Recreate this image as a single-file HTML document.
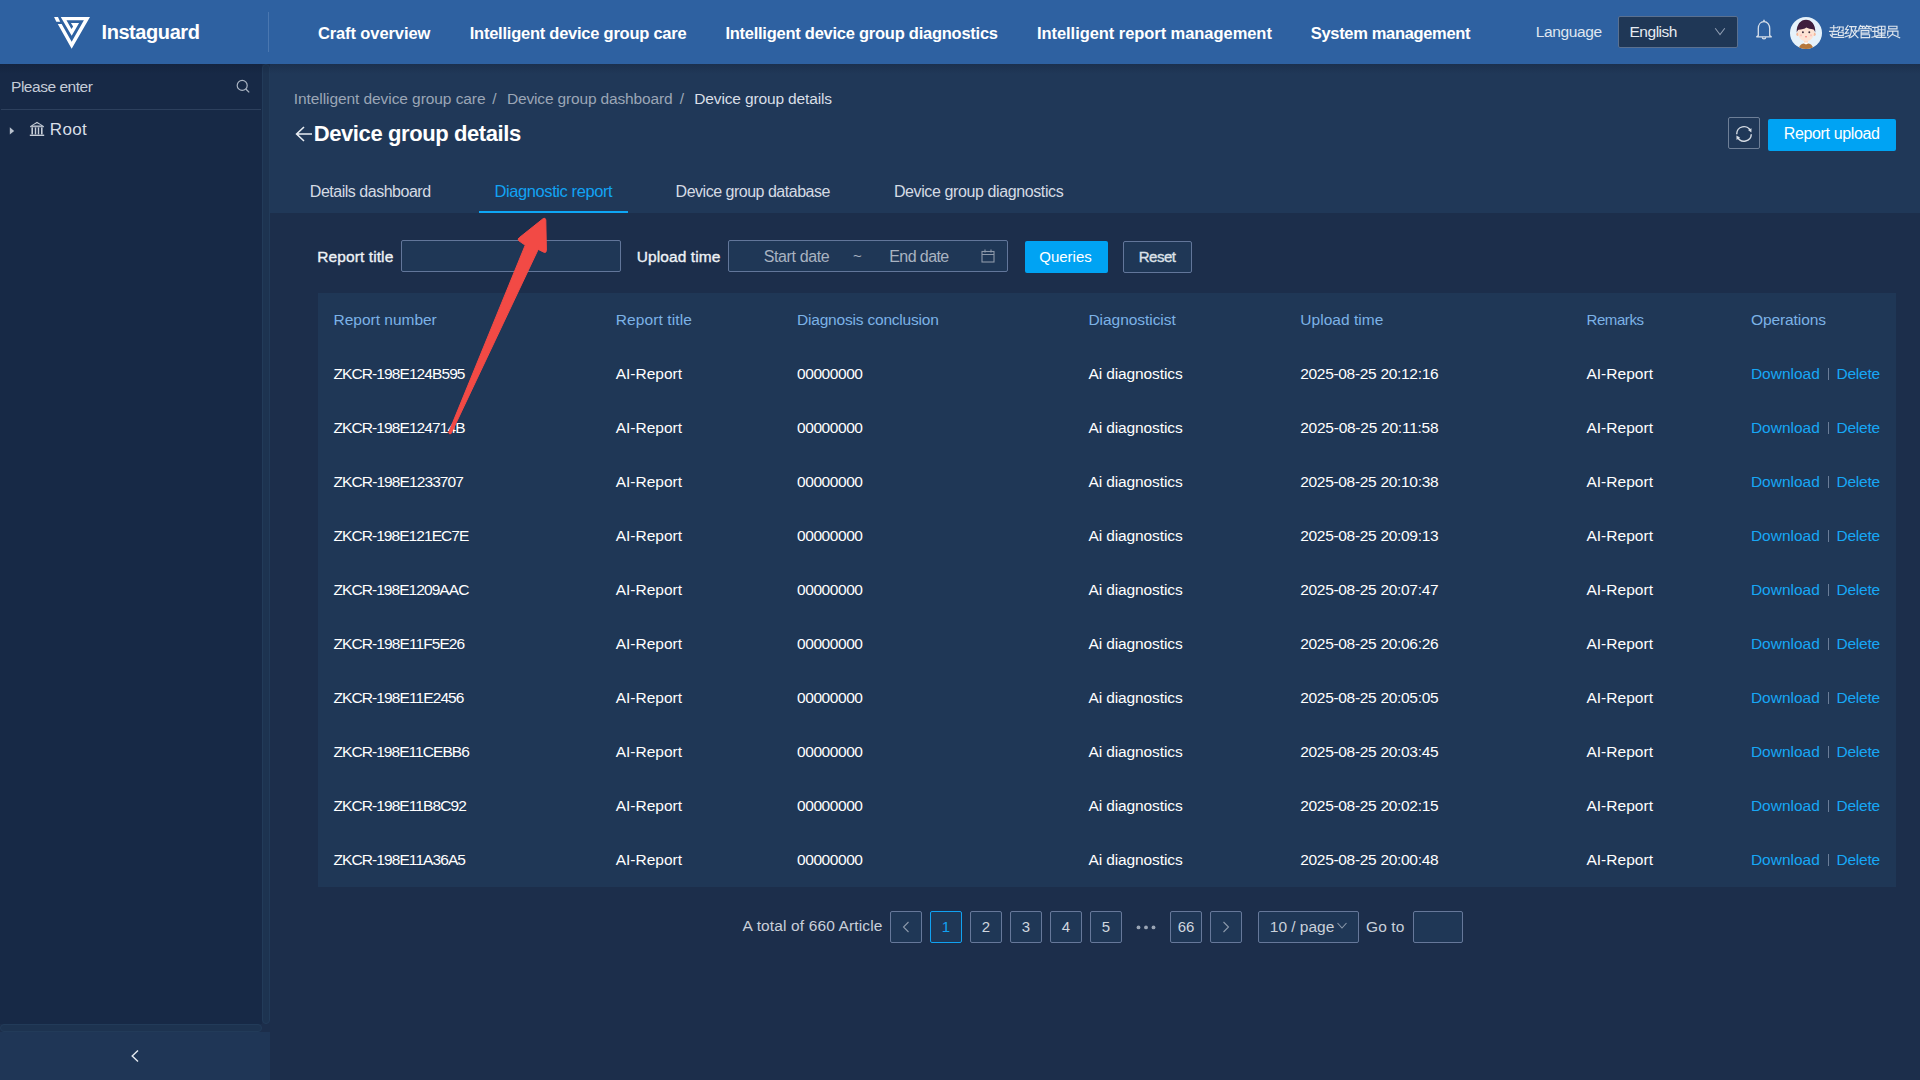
<!DOCTYPE html>
<html><head><meta charset="utf-8"><title>Device group details</title>
<style>
html,body{margin:0;padding:0;width:1920px;height:1080px;overflow:hidden;background:#1c2e4b;font-family:"Liberation Sans",sans-serif}
.a{position:absolute;box-sizing:border-box}
.t{position:absolute;white-space:pre;line-height:1.2;font-family:"Liberation Sans",sans-serif}
svg{position:absolute;overflow:visible}
</style></head><body>
<!-- header -->
<div class="a" style="left:0;top:0;width:1920px;height:64px;background:#2e61a1"></div>
<div class="a" style="left:268px;top:12px;width:1px;height:40px;background:#4a77b0"></div>
<svg style="left:50px;top:12px" width="45" height="40" viewBox="0 0 1215 1080">
  <polygon fill="#fff" points="110,135 215,135 275,265 170,265"/>
  <polygon fill="#fff" points="210,325 315,325 585,805 915,225 445,225 580,460 625,390 565,295 785,295 585,640 290,135 1080,135 585,990"/>
</svg>
<!-- language select -->
<div class="a" style="left:1618px;top:16px;width:119.5px;height:31.5px;background:#1f3756;border:1px solid #5a7090;border-radius:2px"></div>
<svg style="left:1713px;top:27px" width="14" height="10"><path d="M2.2,1.2 L7,7.6 L11.8,1.2" fill="none" stroke="#8d9bb0" stroke-width="1.05"/></svg>
<!-- bell -->
<svg style="left:1754px;top:18px" width="20" height="24" viewBox="0 0 20 24">
  <path d="M4.3,17.6 L4.3,10.6 C4.3,6.4 6.7,3.7 10,3.7 C13.3,3.7 15.7,6.4 15.7,10.6 L15.7,17.6 L17.3,18.8 L2.7,18.8 Z" fill="none" stroke="#d8e0ea" stroke-width="1.3" stroke-linejoin="round"/>
  <path d="M10,1.8 L10,3.7" stroke="#d8e0ea" stroke-width="1.5"/>
  <path d="M8.3,19.2 A1.7,1.7 0 0 0 11.7,19.2" fill="none" stroke="#d8e0ea" stroke-width="1.3"/>
</svg>
<!-- avatar -->
<svg style="left:1790px;top:17px" width="32" height="32" viewBox="0 0 32 32">
  <defs><clipPath id="cc"><circle cx="16" cy="16" r="16"/></clipPath></defs>
  <circle cx="16" cy="16" r="16" fill="#e6f2fb"/>
  <g clip-path="url(#cc)">
    <path d="M8.6,33 C8.6,28.2 11.8,26.2 16,26.2 C20.2,26.2 23.4,28.2 23.4,33 Z" fill="#b5773c"/>
    <path d="M13.2,26 L16,27.6 L18.8,26 L18.2,25 L13.8,25 Z" fill="#ffffff"/>
    <rect x="14" y="22" width="4" height="3.6" fill="#fcd9c4"/>
    <ellipse cx="7.6" cy="17.2" rx="1.3" ry="1.8" fill="#f6b99a"/>
    <ellipse cx="24.4" cy="17.2" rx="1.3" ry="1.8" fill="#f6b99a"/>
    <path d="M7.8,10 L24.2,10 L24.2,14 C24.2,20.5 21,24.2 16,24.2 C11,24.2 7.8,20.5 7.8,14 Z" fill="#fde3d3"/>
    <path d="M6.7,15.5 C6.4,7.5 10.6,2.8 16,2.8 C21.4,2.8 25.6,7.5 25.3,15.5 C24.6,13.8 24,13.2 23.6,12.6 C20.6,12.1 17.6,11.5 16.2,10.6 C15,12 11.5,12.6 8.4,12.8 C7.6,13.6 7.1,14.4 6.7,15.5 Z" fill="#3f1e3d"/>
    <circle cx="12.9" cy="15.3" r="0.95" fill="#3a2a3a"/>
    <circle cx="19.3" cy="15.3" r="0.95" fill="#3a2a3a"/>
    <ellipse cx="16" cy="19.8" rx="1" ry="0.55" fill="#f05a5a"/>
    <circle cx="11" cy="18.3" r="1.1" fill="#fbc4c0"/>
    <circle cx="21" cy="18.3" r="1.1" fill="#fbc4c0"/>
  </g>
</svg>
<!-- chinese name approximated -->
<svg style="left:1830px;top:24px" width="72" height="16" viewBox="0 0 72 16" stroke="#dfe6ee" stroke-width="1.15" fill="none" stroke-linecap="square">
  <path d="M0.31,3.78 L7.25,3.78 M3.78,1.66 L3.78,7.63 M-0.46,7.44 L7.63,7.44 M2.24,8.79 L2.24,13.03 M2.24,10.33 L6.86,10.33 M0.31,10.72 L2.24,13.03 L4.55,13.41 L13.80,13.41 M7.63,3.01 L13.22,3.01 L13.03,6.67 L11.87,6.67 M9.75,3.01 L9.18,5.51 L7.83,6.86 M8.40,8.21 L13.22,8.21 L13.22,11.49 L8.40,11.49 L8.40,8.21"/>
  <path d="M18.04,1.47 L15.53,5.32 L18.23,5.51 L15.15,9.56 L18.62,8.98 M15.34,12.84 L19.00,11.49 M19.58,2.62 L26.13,2.62 L24.59,6.86 L27.67,6.86 M21.51,2.62 L21.12,8.79 L19.19,13.80 M21.89,5.71 L24.20,9.56 L28.06,13.80 M26.52,7.63 L23.43,11.49 L20.74,13.41"/>
  <path d="M30.37,1.47 L29.21,3.78 M29.98,2.43 L34.22,2.43 M31.91,2.62 L32.68,3.78 M36.73,1.47 L35.57,3.78 M36.34,2.43 L41.16,2.43 M38.27,2.62 L39.04,3.78 M28.83,6.86 L28.83,4.74 L41.16,4.74 L41.16,6.86 M34.99,3.20 L34.99,4.55 M31.14,6.67 L38.85,6.67 L38.85,9.18 L31.14,9.18 M31.14,6.67 L31.14,13.80 M31.14,10.72 L39.62,10.72 L39.62,13.61 L31.14,13.61"/>
  <path d="M42.32,3.39 L47.33,3.39 M42.70,7.44 L46.94,7.44 M44.82,3.39 L44.82,12.26 M41.93,13.22 L47.71,11.68 M48.10,2.24 L55.03,2.24 L55.03,9.18 L48.10,9.18 L48.10,2.24 M48.10,5.71 L55.03,5.71 M51.56,2.24 L51.56,13.41 M48.48,11.10 L54.65,11.10 M46.17,13.41 L56.00,13.41"/>
  <path d="M58.69,2.24 L66.98,2.24 L66.98,4.94 L58.69,4.94 L58.69,2.24 M57.73,11.49 L57.73,7.06 L67.94,7.06 L67.94,11.49 M62.74,7.25 L62.74,9.95 L58.12,13.80 M63.13,10.72 L69.68,13.80"/>
</svg>
<!-- sidebar -->
<div class="a" style="left:0;top:64px;width:262px;height:960px;background:#172946"></div>
<div class="a" style="left:262px;top:64px;width:8px;height:960px;background:#1d3350;border:1px solid #223b59;border-radius:4px"></div>
<div class="a" style="left:0;top:1024px;width:262px;height:8px;background:#1d3350;border:1px solid #223b59;border-radius:4px"></div>

<div class="a" style="left:1px;top:109px;width:260px;height:1px;background:#2d405d"></div>
<svg style="left:234px;top:78px" width="18" height="18" viewBox="0 0 18 18">
  <circle cx="8.2" cy="7.4" r="5" fill="none" stroke="#aab4c2" stroke-width="1.2"/>
  <path d="M11.8,11 L15.2,14.4" stroke="#aab4c2" stroke-width="1.3"/>
</svg>
<svg style="left:8px;top:125px" width="10" height="12" viewBox="0 0 10 12"><path d="M1.8,2.3 L6.2,5.9 L1.8,9.6 Z" fill="#b9c1cd"/></svg>
<svg style="left:28px;top:120px" width="18" height="18" viewBox="0 0 18 18" fill="#c7ced8">
  <path d="M9,1.8 L16,6.2 L2,6.2 Z M9,3.2 L13.6,5.4 L4.4,5.4 Z" fill-rule="evenodd"/>
  <rect x="2" y="6.2" width="14" height="1"/>
  <rect x="3.4" y="7.4" width="1.6" height="7"/>
  <rect x="6.8" y="7.4" width="1.4" height="7"/>
  <rect x="9.8" y="7.4" width="1.4" height="7"/>
  <rect x="13" y="7.4" width="1.6" height="7"/>
  <rect x="1.8" y="14.6" width="14.4" height="1.4"/>
</svg>
<!-- collapse bar -->
<div class="a" style="left:0;top:1032px;width:270px;height:48px;background:#1f3656"></div>
<svg style="left:128px;top:1048px" width="14" height="16" viewBox="0 0 14 16"><path d="M10,2.5 L4.2,8 L10,13.5" fill="none" stroke="#e6ebf1" stroke-width="1.4"/></svg>
<!-- main top section -->
<div class="a" style="left:270px;top:64px;width:1650px;height:149px;background:#203858"></div>
<svg style="left:293px;top:124px" width="22" height="20" viewBox="0 0 22 20"><path d="M19,10 H4 M11,3 L3.6,10 L11,17" fill="none" stroke="#e8edf3" stroke-width="1.6"/></svg>
<!-- refresh -->
<div class="a" style="left:1728px;top:117px;width:32px;height:32px;border:1px solid #6e7f97;border-radius:2px"></div>
<svg style="left:1734px;top:124px" width="20" height="20" viewBox="0 0 20 20">
  <path d="M2.7,10.2 A7.3,7.3 0 0 1 16.6,6.9" fill="none" stroke="#d5dbe3" stroke-width="1.45"/>
  <path d="M17.3,10.2 A7.3,7.3 0 0 1 3.5,13.2" fill="none" stroke="#d5dbe3" stroke-width="1.45"/>
  <path d="M14,6 L17.5,4.3 L17.4,8.5 Z" fill="#d5dbe3"/>
  <path d="M2.4,11.6 L6,13.4 L2.6,16 Z" fill="#d5dbe3"/>
</svg>
<div class="a" style="left:1768px;top:119px;width:128px;height:32px;background:#00a3f3;border-radius:2px"></div>
<div class="a" style="left:0;top:64px;width:1920px;height:10px;background:linear-gradient(rgba(8,18,38,0.2),rgba(8,18,38,0))"></div>
<!-- tab underline -->
<div class="a" style="left:479px;top:211px;width:149px;height:2px;background:#0ea6f5"></div>
<!-- filters -->
<div class="a" style="left:401px;top:240px;width:220px;height:32px;background:#1f3756;border:1px solid #62769a;border-radius:2px"></div>
<div class="a" style="left:728px;top:240px;width:280px;height:32px;background:#1f3756;border:1px solid #62769a;border-radius:2px"></div>
<svg style="left:980px;top:248px" width="16" height="16" viewBox="0 0 16 16" fill="none" stroke="#8d99aa" stroke-width="1.1">
  <rect x="2" y="3.5" width="12" height="10.5"/>
  <path d="M2,6.5 H14 M5,1.5 V4.5 M11,1.5 V4.5"/>
</svg>
<div class="a" style="left:1025px;top:241px;width:83px;height:32px;background:#00a3f3;border-radius:2px"></div>
<div class="a" style="left:1123px;top:241px;width:69px;height:32px;background:#1f3756;border:1px solid #62769a;border-radius:2px"></div>
<!-- table -->
<div class="a" style="left:318px;top:293px;width:1578px;height:594px;background:#1f3756"></div>

<!-- pagination -->
<div class="a pg" style="left:890px;top:911px;width:32px;height:32px;background:#1f3756;border:1px solid #66789a;border-radius:2px"></div>
<svg style="left:899px;top:919px" width="14" height="16" viewBox="0 0 14 16"><path d="M9.5,3 L4.5,8 L9.5,13" fill="none" stroke="#8c99ab" stroke-width="1.1"/></svg>
<div class="a" style="left:930px;top:911px;width:32px;height:32px;background:#1f3756;border:1px solid #11a2f2;border-radius:2px"></div>
<div class="a" style="left:970px;top:911px;width:32px;height:32px;background:#1f3756;border:1px solid #66789a;border-radius:2px"></div>
<div class="a" style="left:1010px;top:911px;width:32px;height:32px;background:#1f3756;border:1px solid #66789a;border-radius:2px"></div>
<div class="a" style="left:1050px;top:911px;width:32px;height:32px;background:#1f3756;border:1px solid #66789a;border-radius:2px"></div>
<div class="a" style="left:1090px;top:911px;width:32px;height:32px;background:#1f3756;border:1px solid #66789a;border-radius:2px"></div>
<svg style="left:1134px;top:920px" width="24" height="14" viewBox="0 0 24 14" fill="#9aa5b5"><circle cx="4.5" cy="7.4" r="1.9"/><circle cx="12" cy="7.4" r="1.9"/><circle cx="19.5" cy="7.4" r="1.9"/></svg>
<div class="a" style="left:1170px;top:911px;width:32px;height:32px;background:#1f3756;border:1px solid #66789a;border-radius:2px"></div>
<div class="a" style="left:1210px;top:911px;width:32px;height:32px;background:#1f3756;border:1px solid #66789a;border-radius:2px"></div>
<svg style="left:1219px;top:919px" width="14" height="16" viewBox="0 0 14 16"><path d="M4.5,3 L9.5,8 L4.5,13" fill="none" stroke="#8c99ab" stroke-width="1.1"/></svg>
<div class="a" style="left:1258px;top:911px;width:101px;height:32px;background:#1f3756;border:1px solid #66789a;border-radius:2px"></div>
<svg style="left:1335px;top:920px" width="14" height="12" viewBox="0 0 14 12"><path d="M2.5,3 L7,8 L11.5,3" fill="none" stroke="#8c99ab" stroke-width="1.1"/></svg>
<div class="a" style="left:1413px;top:911px;width:50px;height:32px;background:#1f3756;border:1px solid #66789a;border-radius:2px"></div>
<svg style="left:0;top:0" width="1920" height="1080" viewBox="0 0 1920 1080" font-family="&quot;Liberation Sans&quot;, sans-serif">
<text x="101.50" y="39" font-size="20.0" font-weight="700" fill="#ffffff" textLength="98.41" lengthAdjust="spacing">Instaguard</text>
<text x="317.88" y="39" font-size="16.5" font-weight="700" fill="#ffffff" textLength="112.42" lengthAdjust="spacing">Craft overview</text>
<text x="469.78" y="39" font-size="16.5" font-weight="700" fill="#ffffff" textLength="216.82" lengthAdjust="spacing">Intelligent device group care</text>
<text x="725.38" y="39" font-size="16.5" font-weight="700" fill="#ffffff" textLength="272.62" lengthAdjust="spacing">Intelligent device group diagnostics</text>
<text x="1036.97" y="39" font-size="16.5" font-weight="700" fill="#ffffff" textLength="234.92" lengthAdjust="spacing">Intelligent report management</text>
<text x="1310.77" y="39" font-size="16.5" font-weight="700" fill="#ffffff" textLength="159.72" lengthAdjust="spacing">System management</text>
<text x="1535.72" y="37" font-size="15.5" font-weight="400" fill="#dfe6f0" textLength="66.44" lengthAdjust="spacing">Language</text>
<text x="1629.52" y="37" font-size="15.5" font-weight="400" fill="#e6ebf2" textLength="47.94" lengthAdjust="spacing">English</text>
<text x="11.03" y="92" font-size="15.5" font-weight="400" fill="#c4ccd8" textLength="81.84" lengthAdjust="spacing">Please enter</text>
<text x="49.85" y="135" font-size="17.0" font-weight="400" fill="#d8dee8" textLength="36.76" lengthAdjust="spacing">Root</text>
<text x="293.73" y="104" font-size="15.5" font-weight="400" fill="#9ba6b6" textLength="191.84" lengthAdjust="spacing">Intelligent device group care</text>
<text x="492.23" y="104" font-size="15.5" font-weight="400" fill="#9ba6b6">/</text>
<text x="506.93" y="104" font-size="15.5" font-weight="400" fill="#9ba6b6" textLength="165.64" lengthAdjust="spacing">Device group dashboard</text>
<text x="679.73" y="104" font-size="15.5" font-weight="400" fill="#9ba6b6">/</text>
<text x="694.23" y="104" font-size="15.5" font-weight="400" fill="#d9dfe7" textLength="137.84" lengthAdjust="spacing">Device group details</text>
<text x="313.70" y="141" font-size="22.0" font-weight="700" fill="#ffffff" textLength="207.56" lengthAdjust="spacing">Device group details</text>
<text x="1783.70" y="139" font-size="16.0" font-weight="400" fill="#ffffff" textLength="96.27" lengthAdjust="spacing">Report upload</text>
<text x="309.80" y="197" font-size="16.0" font-weight="400" fill="#d5dbe4" textLength="121.28" lengthAdjust="spacing">Details dashboard</text>
<text x="494.48" y="197" font-size="16.5" font-weight="400" fill="#12a3f3" textLength="118.12" lengthAdjust="spacing">Diagnostic report</text>
<text x="675.60" y="197" font-size="16.0" font-weight="400" fill="#d5dbe4" textLength="154.78" lengthAdjust="spacing">Device group database</text>
<text x="893.90" y="197" font-size="16.0" font-weight="400" fill="#d5dbe4" textLength="169.77" lengthAdjust="spacing">Device group diagnostics</text>
<text x="317.23" y="262" font-size="15.5" font-weight="400" fill="#eef2f6" stroke="#eef2f6" stroke-width="0.35" textLength="76.04" lengthAdjust="spacing">Report title</text>
<text x="636.83" y="262" font-size="15.5" font-weight="400" fill="#eef2f6" stroke="#eef2f6" stroke-width="0.35" textLength="83.44" lengthAdjust="spacing">Upload time</text>
<text x="763.70" y="262" font-size="16.0" font-weight="400" fill="#a9b3c1" textLength="66.08" lengthAdjust="spacing">Start date</text>
<text x="853.05" y="261" font-size="15" font-weight="400" fill="#a9b3c1">~</text>
<text x="889.20" y="262" font-size="16.0" font-weight="400" fill="#a9b3c1" textLength="60.08" lengthAdjust="spacing">End date</text>
<text x="1039.25" y="262" font-size="15.0" font-weight="400" fill="#ffffff" textLength="52.50" lengthAdjust="spacing">Queries</text>
<text x="1138.75" y="262" font-size="15.0" font-weight="400" fill="#dde2e9" stroke="#dde2e9" stroke-width="0.35" textLength="37.20" lengthAdjust="spacing">Reset</text>
<text x="333.53" y="325" font-size="15.5" font-weight="400" fill="#7cb2e6" textLength="103.24" lengthAdjust="spacing">Report number</text>
<text x="615.73" y="325" font-size="15.5" font-weight="400" fill="#7cb2e6" textLength="76.24" lengthAdjust="spacing">Report title</text>
<text x="797.02" y="325" font-size="15.5" font-weight="400" fill="#7cb2e6" textLength="141.84" lengthAdjust="spacing">Diagnosis conclusion</text>
<text x="1088.42" y="325" font-size="15.5" font-weight="400" fill="#7cb2e6" textLength="87.34" lengthAdjust="spacing">Diagnosticist</text>
<text x="1300.22" y="325" font-size="15.5" font-weight="400" fill="#7cb2e6" textLength="83.24" lengthAdjust="spacing">Upload time</text>
<text x="1586.45" y="325" font-size="15.0" font-weight="400" fill="#7cb2e6" textLength="57.60" lengthAdjust="spacing">Remarks</text>
<text x="1750.92" y="325" font-size="15.5" font-weight="400" fill="#7cb2e6" textLength="75.14" lengthAdjust="spacing">Operations</text>
<text x="333.53" y="379" font-size="15.5" font-weight="400" fill="#ffffff" textLength="131.94" lengthAdjust="spacing">ZKCR-198E124B595</text>
<text x="615.73" y="379" font-size="15.5" font-weight="400" fill="#ffffff" textLength="66.34" lengthAdjust="spacing">AI-Report</text>
<text x="797.02" y="379" font-size="15.5" font-weight="400" fill="#ffffff" textLength="65.94" lengthAdjust="spacing">00000000</text>
<text x="1088.42" y="379" font-size="15.5" font-weight="400" fill="#ffffff" textLength="94.24" lengthAdjust="spacing">Ai diagnostics</text>
<text x="1300.22" y="379" font-size="15.5" font-weight="400" fill="#ffffff" textLength="138.34" lengthAdjust="spacing">2025-08-25 20:12:16</text>
<text x="1586.42" y="379" font-size="15.5" font-weight="400" fill="#ffffff" textLength="66.54" lengthAdjust="spacing">AI-Report</text>
<text x="1750.92" y="379" font-size="15.5" font-weight="400" fill="#17a7f5" textLength="68.84" lengthAdjust="spacing">Download</text>
<text x="1836.52" y="379" font-size="15.5" font-weight="400" fill="#17a7f5" textLength="43.54" lengthAdjust="spacing">Delete</text>
<text x="333.53" y="433" font-size="15.5" font-weight="400" fill="#ffffff" textLength="131.94" lengthAdjust="spacing">ZKCR-198E124714B</text>
<text x="615.73" y="433" font-size="15.5" font-weight="400" fill="#ffffff" textLength="66.34" lengthAdjust="spacing">AI-Report</text>
<text x="797.02" y="433" font-size="15.5" font-weight="400" fill="#ffffff" textLength="65.94" lengthAdjust="spacing">00000000</text>
<text x="1088.42" y="433" font-size="15.5" font-weight="400" fill="#ffffff" textLength="94.24" lengthAdjust="spacing">Ai diagnostics</text>
<text x="1300.22" y="433" font-size="15.5" font-weight="400" fill="#ffffff" textLength="138.34" lengthAdjust="spacing">2025-08-25 20:11:58</text>
<text x="1586.42" y="433" font-size="15.5" font-weight="400" fill="#ffffff" textLength="66.54" lengthAdjust="spacing">AI-Report</text>
<text x="1750.92" y="433" font-size="15.5" font-weight="400" fill="#17a7f5" textLength="68.84" lengthAdjust="spacing">Download</text>
<text x="1836.52" y="433" font-size="15.5" font-weight="400" fill="#17a7f5" textLength="43.54" lengthAdjust="spacing">Delete</text>
<text x="333.53" y="487" font-size="15.5" font-weight="400" fill="#ffffff" textLength="130.40" lengthAdjust="spacing">ZKCR-198E1233707</text>
<text x="615.73" y="487" font-size="15.5" font-weight="400" fill="#ffffff" textLength="66.34" lengthAdjust="spacing">AI-Report</text>
<text x="797.02" y="487" font-size="15.5" font-weight="400" fill="#ffffff" textLength="65.94" lengthAdjust="spacing">00000000</text>
<text x="1088.42" y="487" font-size="15.5" font-weight="400" fill="#ffffff" textLength="94.24" lengthAdjust="spacing">Ai diagnostics</text>
<text x="1300.22" y="487" font-size="15.5" font-weight="400" fill="#ffffff" textLength="138.34" lengthAdjust="spacing">2025-08-25 20:10:38</text>
<text x="1586.42" y="487" font-size="15.5" font-weight="400" fill="#ffffff" textLength="66.54" lengthAdjust="spacing">AI-Report</text>
<text x="1750.92" y="487" font-size="15.5" font-weight="400" fill="#17a7f5" textLength="68.84" lengthAdjust="spacing">Download</text>
<text x="1836.52" y="487" font-size="15.5" font-weight="400" fill="#17a7f5" textLength="43.54" lengthAdjust="spacing">Delete</text>
<text x="333.53" y="541" font-size="15.5" font-weight="400" fill="#ffffff" textLength="135.80" lengthAdjust="spacing">ZKCR-198E121EC7E</text>
<text x="615.73" y="541" font-size="15.5" font-weight="400" fill="#ffffff" textLength="66.34" lengthAdjust="spacing">AI-Report</text>
<text x="797.02" y="541" font-size="15.5" font-weight="400" fill="#ffffff" textLength="65.94" lengthAdjust="spacing">00000000</text>
<text x="1088.42" y="541" font-size="15.5" font-weight="400" fill="#ffffff" textLength="94.24" lengthAdjust="spacing">Ai diagnostics</text>
<text x="1300.22" y="541" font-size="15.5" font-weight="400" fill="#ffffff" textLength="138.34" lengthAdjust="spacing">2025-08-25 20:09:13</text>
<text x="1586.42" y="541" font-size="15.5" font-weight="400" fill="#ffffff" textLength="66.54" lengthAdjust="spacing">AI-Report</text>
<text x="1750.92" y="541" font-size="15.5" font-weight="400" fill="#17a7f5" textLength="68.84" lengthAdjust="spacing">Download</text>
<text x="1836.52" y="541" font-size="15.5" font-weight="400" fill="#17a7f5" textLength="43.54" lengthAdjust="spacing">Delete</text>
<text x="333.53" y="595" font-size="15.5" font-weight="400" fill="#ffffff" textLength="135.80" lengthAdjust="spacing">ZKCR-198E1209AAC</text>
<text x="615.73" y="595" font-size="15.5" font-weight="400" fill="#ffffff" textLength="66.34" lengthAdjust="spacing">AI-Report</text>
<text x="797.02" y="595" font-size="15.5" font-weight="400" fill="#ffffff" textLength="65.94" lengthAdjust="spacing">00000000</text>
<text x="1088.42" y="595" font-size="15.5" font-weight="400" fill="#ffffff" textLength="94.24" lengthAdjust="spacing">Ai diagnostics</text>
<text x="1300.22" y="595" font-size="15.5" font-weight="400" fill="#ffffff" textLength="138.34" lengthAdjust="spacing">2025-08-25 20:07:47</text>
<text x="1586.42" y="595" font-size="15.5" font-weight="400" fill="#ffffff" textLength="66.54" lengthAdjust="spacing">AI-Report</text>
<text x="1750.92" y="595" font-size="15.5" font-weight="400" fill="#17a7f5" textLength="68.84" lengthAdjust="spacing">Download</text>
<text x="1836.52" y="595" font-size="15.5" font-weight="400" fill="#17a7f5" textLength="43.54" lengthAdjust="spacing">Delete</text>
<text x="333.53" y="649" font-size="15.5" font-weight="400" fill="#ffffff" textLength="131.66" lengthAdjust="spacing">ZKCR-198E11F5E26</text>
<text x="615.73" y="649" font-size="15.5" font-weight="400" fill="#ffffff" textLength="66.34" lengthAdjust="spacing">AI-Report</text>
<text x="797.02" y="649" font-size="15.5" font-weight="400" fill="#ffffff" textLength="65.94" lengthAdjust="spacing">00000000</text>
<text x="1088.42" y="649" font-size="15.5" font-weight="400" fill="#ffffff" textLength="94.24" lengthAdjust="spacing">Ai diagnostics</text>
<text x="1300.22" y="649" font-size="15.5" font-weight="400" fill="#ffffff" textLength="138.34" lengthAdjust="spacing">2025-08-25 20:06:26</text>
<text x="1586.42" y="649" font-size="15.5" font-weight="400" fill="#ffffff" textLength="66.54" lengthAdjust="spacing">AI-Report</text>
<text x="1750.92" y="649" font-size="15.5" font-weight="400" fill="#17a7f5" textLength="68.84" lengthAdjust="spacing">Download</text>
<text x="1836.52" y="649" font-size="15.5" font-weight="400" fill="#17a7f5" textLength="43.54" lengthAdjust="spacing">Delete</text>
<text x="333.53" y="703" font-size="15.5" font-weight="400" fill="#ffffff" textLength="130.90" lengthAdjust="spacing">ZKCR-198E11E2456</text>
<text x="615.73" y="703" font-size="15.5" font-weight="400" fill="#ffffff" textLength="66.34" lengthAdjust="spacing">AI-Report</text>
<text x="797.02" y="703" font-size="15.5" font-weight="400" fill="#ffffff" textLength="65.94" lengthAdjust="spacing">00000000</text>
<text x="1088.42" y="703" font-size="15.5" font-weight="400" fill="#ffffff" textLength="94.24" lengthAdjust="spacing">Ai diagnostics</text>
<text x="1300.22" y="703" font-size="15.5" font-weight="400" fill="#ffffff" textLength="138.34" lengthAdjust="spacing">2025-08-25 20:05:05</text>
<text x="1586.42" y="703" font-size="15.5" font-weight="400" fill="#ffffff" textLength="66.54" lengthAdjust="spacing">AI-Report</text>
<text x="1750.92" y="703" font-size="15.5" font-weight="400" fill="#17a7f5" textLength="68.84" lengthAdjust="spacing">Download</text>
<text x="1836.52" y="703" font-size="15.5" font-weight="400" fill="#17a7f5" textLength="43.54" lengthAdjust="spacing">Delete</text>
<text x="333.53" y="757" font-size="15.5" font-weight="400" fill="#ffffff" textLength="136.30" lengthAdjust="spacing">ZKCR-198E11CEBB6</text>
<text x="615.73" y="757" font-size="15.5" font-weight="400" fill="#ffffff" textLength="66.34" lengthAdjust="spacing">AI-Report</text>
<text x="797.02" y="757" font-size="15.5" font-weight="400" fill="#ffffff" textLength="65.94" lengthAdjust="spacing">00000000</text>
<text x="1088.42" y="757" font-size="15.5" font-weight="400" fill="#ffffff" textLength="94.24" lengthAdjust="spacing">Ai diagnostics</text>
<text x="1300.22" y="757" font-size="15.5" font-weight="400" fill="#ffffff" textLength="138.34" lengthAdjust="spacing">2025-08-25 20:03:45</text>
<text x="1586.42" y="757" font-size="15.5" font-weight="400" fill="#ffffff" textLength="66.54" lengthAdjust="spacing">AI-Report</text>
<text x="1750.92" y="757" font-size="15.5" font-weight="400" fill="#17a7f5" textLength="68.84" lengthAdjust="spacing">Download</text>
<text x="1836.52" y="757" font-size="15.5" font-weight="400" fill="#17a7f5" textLength="43.54" lengthAdjust="spacing">Delete</text>
<text x="333.53" y="811" font-size="15.5" font-weight="400" fill="#ffffff" textLength="133.22" lengthAdjust="spacing">ZKCR-198E11B8C92</text>
<text x="615.73" y="811" font-size="15.5" font-weight="400" fill="#ffffff" textLength="66.34" lengthAdjust="spacing">AI-Report</text>
<text x="797.02" y="811" font-size="15.5" font-weight="400" fill="#ffffff" textLength="65.94" lengthAdjust="spacing">00000000</text>
<text x="1088.42" y="811" font-size="15.5" font-weight="400" fill="#ffffff" textLength="94.24" lengthAdjust="spacing">Ai diagnostics</text>
<text x="1300.22" y="811" font-size="15.5" font-weight="400" fill="#ffffff" textLength="138.34" lengthAdjust="spacing">2025-08-25 20:02:15</text>
<text x="1586.42" y="811" font-size="15.5" font-weight="400" fill="#ffffff" textLength="66.54" lengthAdjust="spacing">AI-Report</text>
<text x="1750.92" y="811" font-size="15.5" font-weight="400" fill="#17a7f5" textLength="68.84" lengthAdjust="spacing">Download</text>
<text x="1836.52" y="811" font-size="15.5" font-weight="400" fill="#17a7f5" textLength="43.54" lengthAdjust="spacing">Delete</text>
<text x="333.53" y="865" font-size="15.5" font-weight="400" fill="#ffffff" textLength="132.44" lengthAdjust="spacing">ZKCR-198E11A36A5</text>
<text x="615.73" y="865" font-size="15.5" font-weight="400" fill="#ffffff" textLength="66.34" lengthAdjust="spacing">AI-Report</text>
<text x="797.02" y="865" font-size="15.5" font-weight="400" fill="#ffffff" textLength="65.94" lengthAdjust="spacing">00000000</text>
<text x="1088.42" y="865" font-size="15.5" font-weight="400" fill="#ffffff" textLength="94.24" lengthAdjust="spacing">Ai diagnostics</text>
<text x="1300.22" y="865" font-size="15.5" font-weight="400" fill="#ffffff" textLength="138.34" lengthAdjust="spacing">2025-08-25 20:00:48</text>
<text x="1586.42" y="865" font-size="15.5" font-weight="400" fill="#ffffff" textLength="66.54" lengthAdjust="spacing">AI-Report</text>
<text x="1750.92" y="865" font-size="15.5" font-weight="400" fill="#17a7f5" textLength="68.84" lengthAdjust="spacing">Download</text>
<text x="1836.52" y="865" font-size="15.5" font-weight="400" fill="#17a7f5" textLength="43.54" lengthAdjust="spacing">Delete</text>
<text x="742.62" y="931" font-size="15.5" font-weight="400" fill="#c9d0da" textLength="139.74" lengthAdjust="spacing">A total of 660 Article</text>
<text x="1366.02" y="932" font-size="15.5" font-weight="400" fill="#c9d0da" textLength="38.34" lengthAdjust="spacing">Go to</text>
<text x="1269.82" y="932" font-size="15.5" font-weight="400" fill="#c9d0da" textLength="64.44" lengthAdjust="spacing">10 / page</text>
</svg>
<span class="t" style="left:930px;top:911px;width:32px;height:32px;line-height:32px;text-align:center;font-size:15px;color:#11a2f2">1</span>
<span class="t" style="left:970px;top:911px;width:32px;height:32px;line-height:32px;text-align:center;font-size:15px;color:#d0d6df">2</span>
<span class="t" style="left:1010px;top:911px;width:32px;height:32px;line-height:32px;text-align:center;font-size:15px;color:#d0d6df">3</span>
<span class="t" style="left:1050px;top:911px;width:32px;height:32px;line-height:32px;text-align:center;font-size:15px;color:#d0d6df">4</span>
<span class="t" style="left:1090px;top:911px;width:32px;height:32px;line-height:32px;text-align:center;font-size:15px;color:#d0d6df">5</span>
<span class="t" style="left:1170px;top:911px;width:32px;height:32px;line-height:32px;text-align:center;font-size:15px;color:#d0d6df">66</span>
<!-- separators in operations -->
<div class="a" style="left:1828px;top:368px;width:1px;height:12px;background:#6a7d98"></div>
<div class="a" style="left:1828px;top:422px;width:1px;height:12px;background:#6a7d98"></div>
<div class="a" style="left:1828px;top:476px;width:1px;height:12px;background:#6a7d98"></div>
<div class="a" style="left:1828px;top:530px;width:1px;height:12px;background:#6a7d98"></div>
<div class="a" style="left:1828px;top:584px;width:1px;height:12px;background:#6a7d98"></div>
<div class="a" style="left:1828px;top:638px;width:1px;height:12px;background:#6a7d98"></div>
<div class="a" style="left:1828px;top:692px;width:1px;height:12px;background:#6a7d98"></div>
<div class="a" style="left:1828px;top:746px;width:1px;height:12px;background:#6a7d98"></div>
<div class="a" style="left:1828px;top:800px;width:1px;height:12px;background:#6a7d98"></div>
<div class="a" style="left:1828px;top:854px;width:1px;height:12px;background:#6a7d98"></div>
<!-- red annotation arrow -->
<svg style="left:0;top:0" width="1920" height="1080" viewBox="0 0 1920 1080">
  <path d="M448.6,432.6 L525.2,245.2 L518.6,240.6 Q517.4,238.8 519.4,237.6 L543.2,218.6 Q545.4,217.4 545.8,219.8 L546.4,250.6 Q546.2,253.2 543.8,252.2 L538.2,249.4 L451.2,433.4 Q449.6,435 448.6,432.6 Z" fill="#f24a45" stroke="#f24a45" stroke-width="1" stroke-linejoin="round"/>
</svg>
</body></html>
